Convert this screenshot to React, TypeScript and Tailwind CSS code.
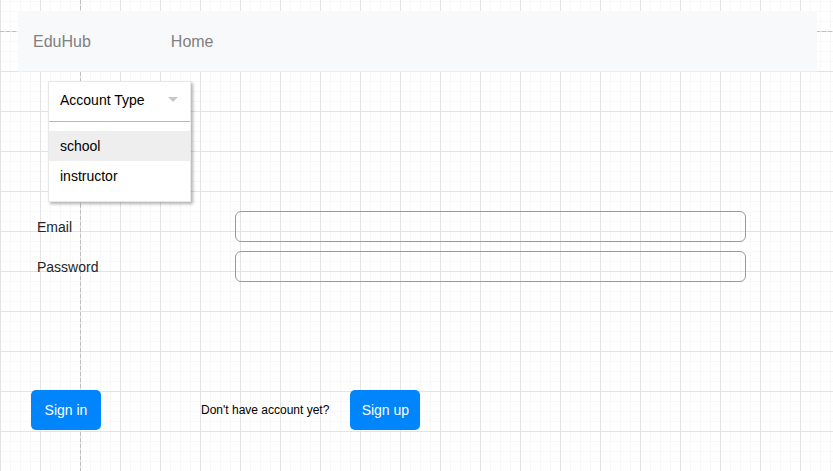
import { useState } from "react";

const accountTypes = ["school", "instructor"];

function CanvasGrid() {
  return (
    <svg className="absolute inset-0 -z-10 h-full w-full" aria-hidden="true" shapeRendering="crispEdges">
      <defs>
        <pattern id="minor" width="10" height="10" patternUnits="userSpaceOnUse" y="1">
          <path d="M0 0H10V1H1V10H0Z" fill="#f8f8f8" />
        </pattern>
        <pattern id="major" width="40" height="40" patternUnits="userSpaceOnUse" y="31">
          <path d="M0 0H40V1H1V40H0Z" fill="#e3e3e3" />
        </pattern>
      </defs>
      <rect width="100%" height="100%" fill="url(#minor)" />
      <rect width="100%" height="100%" fill="url(#major)" />
      <line x1="0" y1="31.5" x2="100%" y2="31.5" stroke="#bebebe" strokeDasharray="4 2" />
      <line x1="80.5" y1="0" x2="80.5" y2="100%" stroke="#bebebe" strokeDasharray="4 2" />
    </svg>
  );
}

function AccountTypeMenu() {
  const [selected, setSelected] = useState("school");
  return (
    <div className="w-[143px] border border-[#e8e8e8] bg-white pb-[10px] text-sm text-black shadow-[2px_2px_3px_rgba(0,0,0,0.3)]">
      <div className="relative border-b border-[#b8b8b8]">
        <select
          aria-label="Account Type"
          defaultValue=""
          onChange={(e) => setSelected(e.target.value)}
          className="block h-[39px] w-full appearance-none bg-transparent pr-8 pb-1 pl-[11px] outline-none"
        >
          <option value="">Account Type</option>
          {accountTypes.map((type) => (
            <option key={type}>{type}</option>
          ))}
        </select>
        <svg className="pointer-events-none absolute top-[15px] right-3 h-[5px] w-[10px]" viewBox="0 0 10 5" aria-hidden="true">
          <path d="M0 0H10L5 5Z" fill="#c8c8c8" />
        </svg>
      </div>
      <ul className="pt-[9px]">
        {accountTypes.map((type) => (
          <li key={type}>
            <button
              type="button"
              aria-pressed={selected === type}
              onClick={() => setSelected(type)}
              className={
                selected === type
                  ? "block h-[30px] w-full bg-[#eeeeee] px-[11px] text-left"
                  : "block h-[30px] w-full px-[11px] text-left"
              }
            >
              {type}
            </button>
          </li>
        ))}
      </ul>
    </div>
  );
}

function Field({ id, label, type }: { id: string; label: string; type: string }) {
  return (
    <div className="flex items-center">
      <label htmlFor={id} className="w-[198px] shrink-0 text-sm text-[#212529]">
        {label}
      </label>
      <input
        id={id}
        type={type}
        className="h-[31px] min-w-0 flex-1 rounded-md border border-[#999999] bg-transparent px-2 text-sm outline-none"
      />
    </div>
  );
}

function PrimaryButton({ label }: { label: string }) {
  return (
    <button type="submit" className="h-10 w-[70px] rounded-[5px] bg-[#0085fc] text-sm text-white">
      {label}
    </button>
  );
}

export default function App() {
  return (
    <div className="relative isolate min-h-screen overflow-hidden bg-white pt-[11px] font-['Liberation_Sans',Arial,sans-serif]">
      <CanvasGrid />
      <nav className="mr-4 ml-[18px] flex h-[61px] items-center gap-20 border-b border-[#eeeeee] bg-[#f8f9fb] px-[15px] pt-0.5 text-base text-[#808080]">
        <a href="#">EduHub</a>
        <a href="#">Home</a>
      </nav>
      <form className="pt-[9px]" onSubmit={(e) => e.preventDefault()}>
        <div className="pl-12">
          <AccountTypeMenu />
        </div>
        <div className="flex flex-col gap-[9px] pt-[9px] pr-[87px] pl-[37px]">
          <Field id="email" label="Email" type="email" />
          <Field id="password" label="Password" type="password" />
        </div>
        <div className="flex items-center pt-[108px] pb-10 pl-[31px]">
          <PrimaryButton label="Sign in" />
          <p className="pr-[21px] pl-[100px] text-xs text-black">Don't have account yet?</p>
          <PrimaryButton label="Sign up" />
        </div>
      </form>
    </div>
  );
}
